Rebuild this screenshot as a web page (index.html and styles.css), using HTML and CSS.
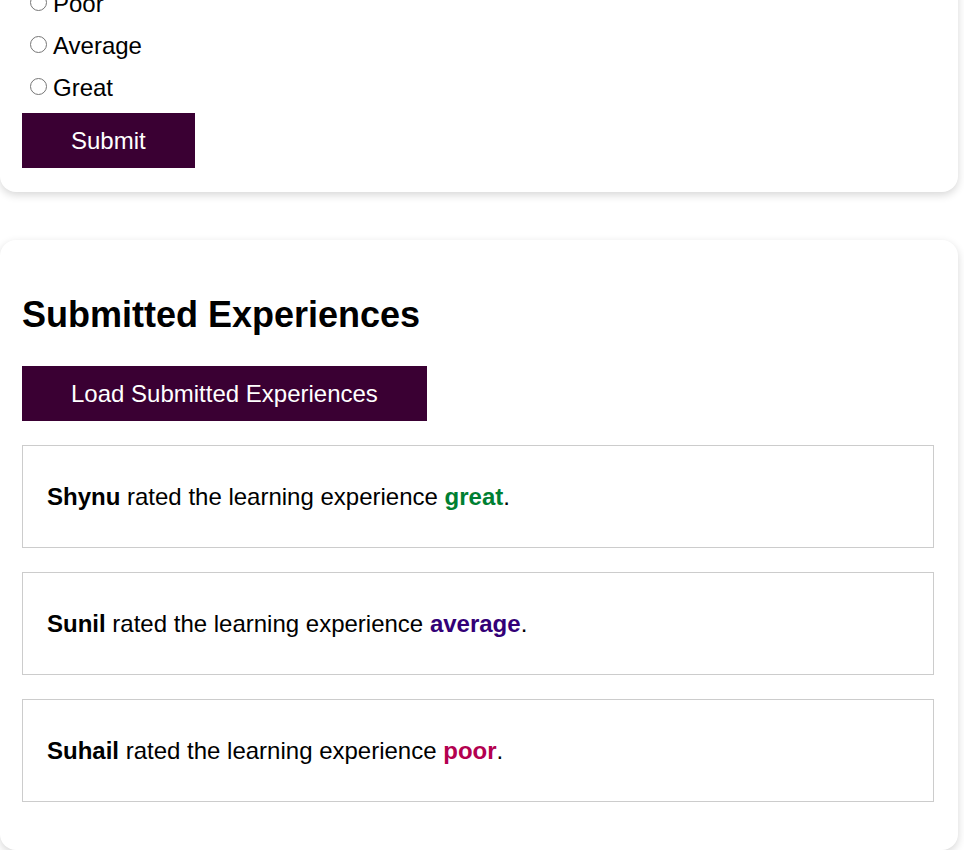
FILE: index.html
```html
<!DOCTYPE html>
<html lang="en">
<head>
<meta charset="utf-8">
<title>Learning Experience</title>
<link rel="stylesheet" href="styles.css">
</head>
<body>
  <main class="page">
    <section class="card form-card">
      <form class="rating-form">
        <label class="option"><input type="radio" name="rating" value="poor"><span>Poor</span></label>
        <label class="option"><input type="radio" name="rating" value="average"><span>Average</span></label>
        <label class="option"><input type="radio" name="rating" value="great"><span>Great</span></label>
        <button type="button" class="btn submit-btn">Submit</button>
      </form>
    </section>

    <section class="card list-card">
      <h2 class="title">Submitted Experiences</h2>
      <button type="button" class="btn load-btn">Load Submitted Experiences</button>
      <div class="entries">
        <div class="entry"><b>Shynu</b> rated the learning experience <b class="great">great</b>.</div>
        <div class="entry"><b>Sunil</b> rated the learning experience <b class="average">average</b>.</div>
        <div class="entry"><b>Suhail</b> rated the learning experience <b class="poor">poor</b>.</div>
      </div>
    </section>
  </main>
</body>
</html>
```
FILE: styles.css
```css
* { box-sizing: border-box; }

html, body {
  margin: 0;
  padding: 0;
  background: #ffffff;
}

body {
  font-family: "Liberation Sans", Arial, sans-serif;
  font-size: 24px;
  color: #000;
  overflow: hidden;
}

.page {
  width: 958px;
  display: flex;
  flex-direction: column;
  gap: 48px;
}

.card {
  background: #fff;
  border-radius: 16px;
  box-shadow: 0 3px 8px rgba(0, 0, 0, 0.16);
  padding: 24px 24px 24px 22px;
}

.form-card {
  margin-top: -34px;
}

.rating-form {
  display: flex;
  flex-direction: column;
  align-items: flex-start;
  gap: 14px;
}

.option {
  display: flex;
  align-items: center;
  height: 28px;
  line-height: 28px;
}

.option input {
  width: 17px;
  height: 17px;
  margin: -4px 6px 0 8px;
  accent-color: #3a0033;
}

.btn {
  background: #3a0033;
  color: #fff;
  border: none;
  border-radius: 0;
  font-family: "Liberation Sans", Arial, sans-serif;
  font-size: 24px;
  line-height: 27px;
  padding: 14px 49px;
  cursor: pointer;
}

.submit-btn {
  margin-top: -3px;
}

.list-card {
  padding-bottom: 48px;
}

.title {
  font-size: 36px;
  font-weight: bold;
  margin: 30px 0 31px;
  line-height: 41px;
}

.load-btn {
  display: block;
}

.entries {
  margin-top: 24px;
  display: flex;
  flex-direction: column;
  gap: 24px;
}

.entry {
  border: 1px solid #cccccc;
  padding: 37px 24px 36px 24px;
  line-height: 28px;
}

.great { color: #007f32; }
.average { color: #330077; }
.poor { color: #b3004f; }
```
